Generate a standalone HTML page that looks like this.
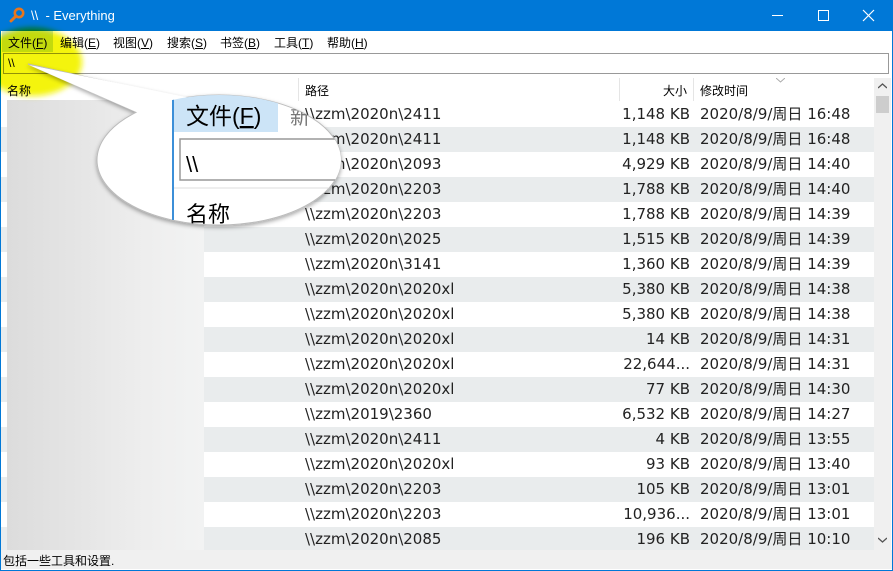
<!DOCTYPE html>
<html><head><meta charset="utf-8"><style>
*{margin:0;padding:0;box-sizing:border-box}
body{width:893px;height:571px;overflow:hidden;background:#fff;font-family:"Liberation Sans","Noto Sans CJK SC",sans-serif;position:relative}
.abs{position:absolute}
.title{left:0;top:0;width:893px;height:31px;background:#0078d7;color:#fff;font-size:13px}
.menu{top:31px;left:1px;width:891px;height:21px;background:#fff;font-size:12px}
.menu span{position:absolute;top:3px}
.search{left:3px;top:53px;width:886px;height:21px;border:1px solid #999;background:#fff}
.hdr{top:78px;left:1px;width:872px;height:23px;font-size:12px;color:#000}
.row{position:absolute;left:1px;width:873px;height:25px;font-size:15px;color:#222;font-family:"DejaVu Sans","Noto Sans CJK SC",sans-serif}
.row.g{background:#e9eced}
.row span{position:absolute;top:2px;line-height:20px;white-space:nowrap}
.status{left:1px;top:550px;width:891px;height:19px;background:#f0f0f0;font-size:12px}
</style></head><body>
<div class="abs" style="left:0;top:0;width:893px;height:571px;border:1px solid #0078d7;border-top:none"></div>
<div class="abs title">
<svg class="abs" style="left:9px;top:7px" width="16" height="16" viewBox="0 0 16 16"><circle cx="10" cy="6" r="4.2" fill="none" stroke="#e8761c" stroke-width="2.6"/><line x1="7" y1="9" x2="2" y2="14" stroke="#e8761c" stroke-width="3" stroke-linecap="round"/></svg>
<span class="abs" style="left:31px;top:8px">\\&nbsp; - Everything</span>
<div class="abs" style="left:772px;top:15px;width:11px;height:1px;background:#fff"></div>
<div class="abs" style="left:818px;top:10px;width:11px;height:11px;border:1px solid #fff"></div>
<svg class="abs" style="left:862px;top:9px" width="13" height="13"><path d="M1 1L12 12M12 1L1 12" stroke="#fff" stroke-width="1.2"/></svg>
</div>
<div class="abs menu">
<div class="abs" style="left:1px;top:0;width:51px;height:21px;background:#cce4f7"></div>
<span style="left:7px">文件(<u>F</u>)</span><span style="left:59px">编辑(<u>E</u>)</span><span style="left:112px">视图(<u>V</u>)</span><span style="left:166px">搜索(<u>S</u>)</span><span style="left:219px">书签(<u>B</u>)</span><span style="left:273px">工具(<u>T</u>)</span><span style="left:326px">帮助(<u>H</u>)</span>
</div>
<div class="abs search"><span class="abs" style="left:4px;top:2px;font-size:12px">\\</span></div>
<div class="abs hdr">
<span class="abs" style="left:6px;top:4px">名称</span>
<div class="abs" style="left:297px;top:0;width:1px;height:23px;background:#e5e5e5"></div>
<span class="abs" style="left:304px;top:4px">路径</span>
<div class="abs" style="left:618px;top:0;width:1px;height:23px;background:#e5e5e5"></div>
<span class="abs" style="left:662px;top:4px">大小</span>
<div class="abs" style="left:692px;top:0;width:1px;height:23px;background:#e5e5e5"></div>
<span class="abs" style="left:699px;top:4px">修改时间</span>
<svg class="abs" style="left:775px;top:0" width="9" height="5"><path d="M0 0L4.5 4L9 0" fill="none" stroke="#aaa"/></svg>
</div>
<div id="rows"></div>
<div class="abs" style="left:874px;top:78px;width:17px;height:472px;background:#f0f0f0"></div>
<svg class="abs" style="left:878px;top:83px" width="9" height="6"><path d="M0 5L4.5 1L9 5" fill="none" stroke="#555" stroke-width="1.3"/></svg>
<div class="abs" style="left:876px;top:96px;width:13px;height:17px;background:#cdcdcd"></div>
<svg class="abs" style="left:878px;top:537px" width="9" height="6"><path d="M0 1L4.5 5L9 1" fill="none" stroke="#555" stroke-width="1.3"/></svg>
<div class="abs" style="left:7px;top:100px;width:197px;height:450px;background:linear-gradient(90deg,#dcdcdc 0%,#e6e6e6 40%,#eeeeee 70%,#f2f3f3 100%)"></div>
<div class="abs status"><span class="abs" style="left:2px;top:2px">包括一些工具和设置.</span></div>
<svg class="abs" style="left:0;top:0;mix-blend-mode:multiply" width="893" height="571">
<defs><filter id="b" x="-50%" y="-50%" width="200%" height="200%"><feGaussianBlur stdDeviation="3"/></filter></defs>
<ellipse cx="32" cy="62" rx="50" ry="34" fill="#f4f40a" filter="url(#b)"/>
</svg>
<svg class="abs" style="left:0;top:0" width="893" height="571">
<defs>
<clipPath id="c"><ellipse cx="219" cy="160" rx="122" ry="65"/></clipPath>
<filter id="s"><feDropShadow dx="0" dy="2" stdDeviation="2" flood-color="#000" flood-opacity="0.35"/></filter></defs>
<g filter="url(#s)">
<path d="M28 64 L150 118 L190 100 Z" fill="#fff" stroke="#bbb"/>
<ellipse cx="219" cy="160" rx="122" ry="65" fill="#fff" stroke="#bbb"/>
<path d="M29 65 L150 118 L195 99" fill="#fff" stroke="none"/>
</g>
<g clip-path="url(#c)">
<rect x="172" y="90" width="2" height="130" fill="#3c8fd8"/>
<rect x="174" y="90" width="104" height="42" fill="#cce4f7"/>
<text x="186" y="124" font-size="23" font-family="Liberation Sans,Noto Sans CJK SC,sans-serif">文件(<tspan text-decoration="underline">F</tspan>)</text>
<text x="290" y="124" font-size="20" fill="#777" font-family="Noto Sans CJK SC,sans-serif">新</text>
<rect x="180" y="139" width="170" height="41" fill="#fff" stroke="#999" stroke-width="1.5"/>
<text x="186" y="172" font-size="22" font-family="Liberation Sans,sans-serif">\\</text>
<line x1="174" y1="188" x2="350" y2="188" stroke="#ddd"/>
<text x="186" y="222" font-size="22" font-family="Noto Sans CJK SC,sans-serif">名称</text>
</g>
</svg>
<script>
var d=[["2411","1,148 KB","16:48"],["2411","1,148 KB","16:48"],["2093","4,929 KB","14:40"],["2203","1,788 KB","14:40"],["2203","1,788 KB","14:39"],["2025","1,515 KB","14:39"],["3141","1,360 KB","14:39"],["2020xl","5,380 KB","14:38"],["2020xl","5,380 KB","14:38"],["2020xl","14 KB","14:31"],["2020xl","22,644...","14:31"],["2020xl","77 KB","14:30"],["2360","6,532 KB","14:27",1],["2411","4 KB","13:55"],["2020xl","93 KB","13:40"],["2203","105 KB","13:01"],["2203","10,936...","13:01"],["2085","196 KB","10:10"]];
var h="";d.forEach(function(r,i){var y=102+i*25;h+='<div class="row'+(i%2?' g':'')+'" style="top:'+y+'px"><span style="left:304px">\\\\zzm\\'+(r[3]?'2019':'2020n')+'\\'+r[0]+'</span><span style="right:184px">'+r[1]+'</span><span style="left:699px">2020/8/9/周日 '+r[2]+'</span></div>';});
document.getElementById("rows").innerHTML=h;
</script>
</body></html>
